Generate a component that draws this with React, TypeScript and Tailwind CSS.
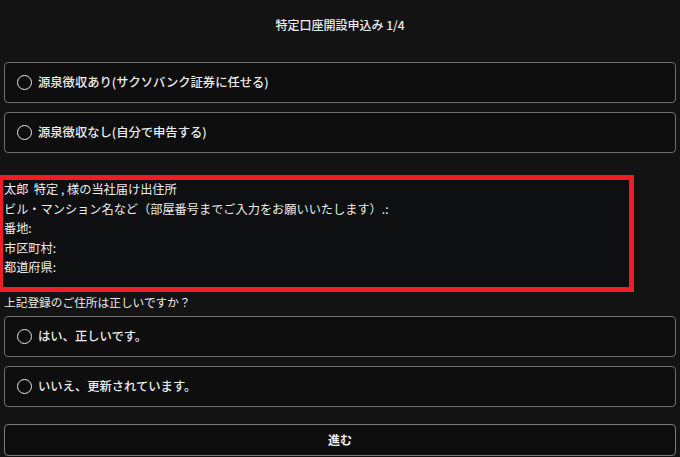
import React from "react";

const font = { fontFamily: '"Noto Sans CJK JP", "Noto Sans", sans-serif' };

function Option({ label }: { label: string }) {
  return (
    <div className="flex h-[41px] items-center gap-[6px] rounded-[4px] border border-[#6e6e6e] bg-[#0e0e0e] pl-[12px]">
      <span className="h-[15px] w-[15px] rounded-full border-[1.5px] border-[#e8e8e8]" />
      <span className="text-[12.3px] font-medium text-[#ececec]">{label}</span>
    </div>
  );
}

export default function App() {
  return (
    <div className="min-h-[457px] w-[680px] overflow-hidden bg-[#131313] px-[4px] text-[#ececec]" style={font}>
      <div className="flex h-[62px] items-start justify-center pt-[16px] text-[12px] font-medium">
        特定口座開設申込み 1/4
      </div>
      <div className="flex flex-col gap-[9px]">
        <Option label="源泉徴収あり(サクソバンク証券に任せる)" />
        <Option label="源泉徴収なし(自分で申告する)" />
      </div>
      <div className="ml-[-6px] mt-[22px] w-[636px] border-[5px] border-[#f01d25] bg-[#0d0f10] pb-[9.5px] pl-[1px] text-[12.2px] leading-[19.5px]">
        <div>太郎&nbsp;&nbsp;特定 , 様の当社届け出住所</div>
        <div>ビル・マンション名など（部屋番号までご入力をお願いいたします）.:</div>
        <div>番地:</div>
        <div>市区町村:</div>
        <div>都道府県:</div>
      </div>
      <div className="h-[24px] text-[11.7px] leading-[20px]">上記登録のご住所は正しいですか？</div>
      <div className="flex flex-col gap-[9px]">
        <Option label="はい、正しいです。" />
        <Option label="いいえ、更新されています。" />
      </div>
      <div className="mt-[17px] flex h-[32px] items-center justify-center rounded-[4px] border border-[#7a7a7a] bg-[#0e0e0e] text-[12px] font-bold">
        進む
      </div>
    </div>
  );
}
